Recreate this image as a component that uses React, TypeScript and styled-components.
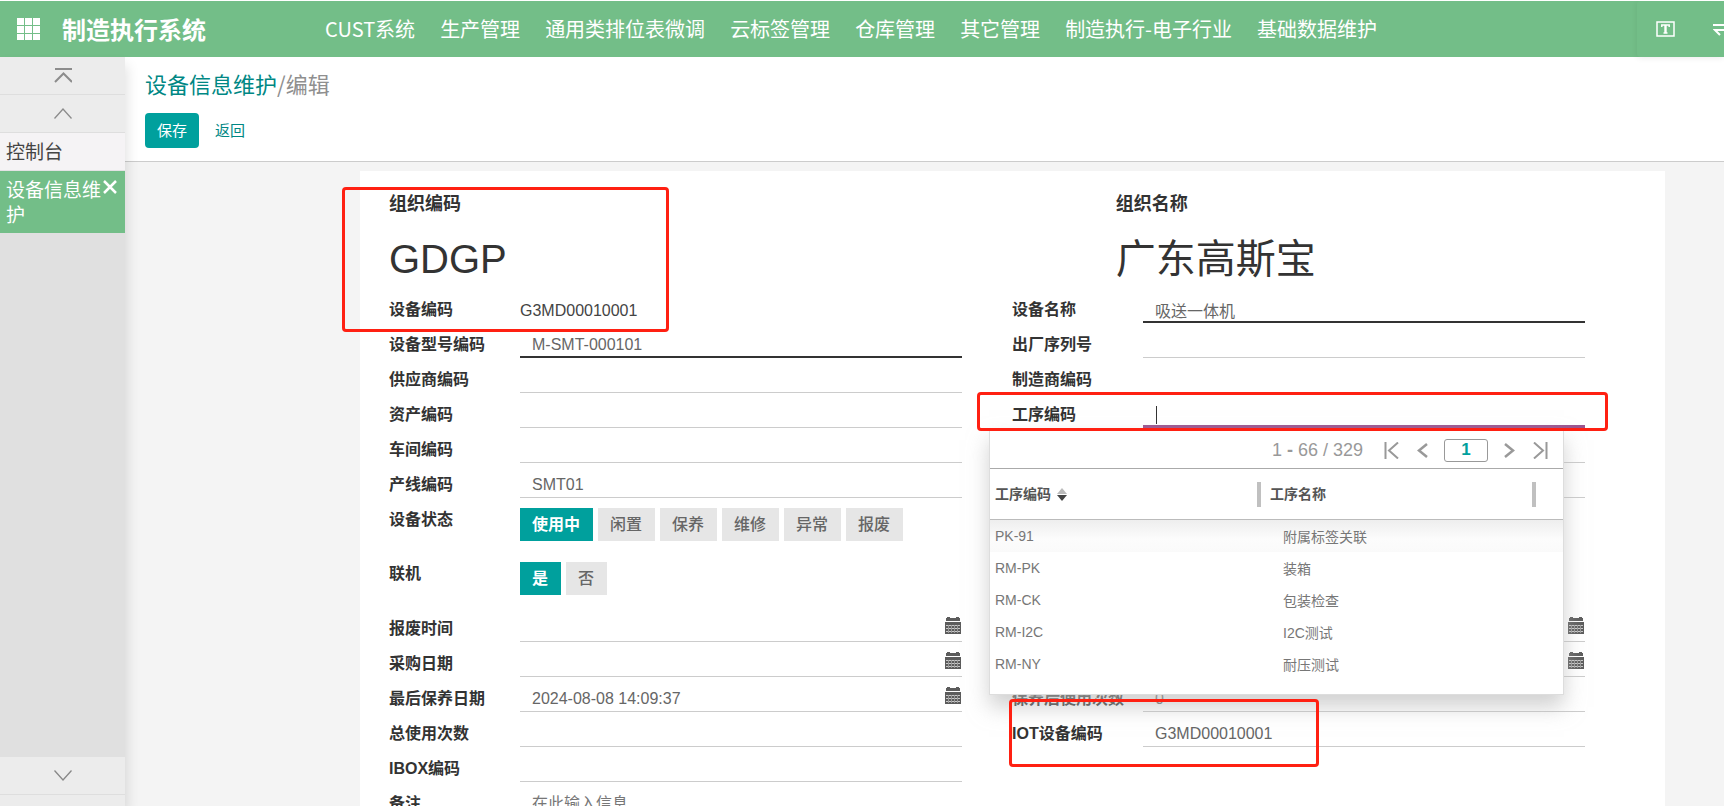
import React from "react";
import styled, { createGlobalStyle, css } from "styled-components";

const sans = `"Liberation Sans", "Noto Sans CJK SC", sans-serif`;
const cjk = `"Noto Sans CJK SC", "Noto Sans", sans-serif`;

const Global = createGlobalStyle`
  *, *::before, *::after { box-sizing: border-box; }
  body { margin: 0; background: #fff; font-family: ${sans}; font-size: 16px; color: #333; }
  button, input { font-family: inherit; }
  button { border: 0; padding: 0; background: none; cursor: pointer; color: inherit; }
  a { text-decoration: none; }
`;

const Shell = styled.div`
  height: 100vh;
  border-top: 1px solid #fff;
  display: flex;
  flex-direction: column;
  overflow: hidden;
`;

/* ---------- top bar ---------- */
const TopBar = styled.header`
  flex: none;
  height: 56px;
  display: flex;
  align-items: stretch;
  background: #73be88;
  color: #fff;
  font-family: ${cjk};
  overflow: visible;
`;
const Brand = styled.div`
  flex: none;
  width: 325px;
  padding-left: 17px;
  display: flex;
  align-items: center;
  gap: 22px;
  font-size: 24px;
  font-weight: 700;
  line-height: 32px;
`;
const IconButton = styled.button`
  display: flex;
  align-items: center;
  justify-content: center;
`;
const Nav = styled.nav`
  flex: 1;
  min-width: 0;
  display: flex;
  align-items: center;
  gap: 25px;
  overflow: hidden;
`;
const NavLink = styled.a`
  color: #fff;
  font-size: 20px;
  line-height: 28px;
  white-space: nowrap;
`;
const UserTools = styled.div`
  flex: none;
  width: 87px;
  padding-left: 19px;
  display: flex;
  align-items: center;
  gap: 38px;
  overflow: hidden;
  background: #73be88;
  border-radius: 4px 0 0 4px;
`;
const ToolsShadow = styled.div`
  display: flex;
  border-radius: 4px;
  position: relative;
  z-index: 3;
  box-shadow: 0 1px 6px rgba(0, 0, 0, 0.08);
`;

/* ---------- sidebar ---------- */
const Body = styled.div`
  flex: 1;
  min-height: 0;
  display: flex;
`;
const Sidebar = styled.aside`
  flex: none;
  position: relative;
  z-index: 2;
  width: 125px;
  display: flex;
  flex-direction: column;
  background: #e0e0e0;
  box-shadow: 2px 8px 12px rgba(0, 0, 0, 0.12);
  font-family: ${cjk};
`;
const ScrollButton = styled.button`
  flex: none;
  width: 100%;
  height: 38px;
  display: flex;
  align-items: center;
  justify-content: center;
  background: #ececec;
  border-bottom: 1px solid #dedede;
`;
const SidebarFoot = styled.div`
  margin-top: auto;
  height: 49px;
  overflow: hidden;
`;
const Tab = styled.div<{ $active?: boolean }>`
  display: flex;
  align-items: flex-start;
  gap: 2px;
  padding: 5px 6px 7px;
  font-size: 19px;
  line-height: 25px;
  background: ${(p) => (p.$active ? "#73be88" : "#f5f3f5")};
  border-bottom: ${(p) => (p.$active ? "0" : "1px solid #e4e2e4")};
`;
const TabLink = styled.a<{ $active?: boolean }>`
  width: 95px;
  color: ${(p) => (p.$active ? "#fff" : "#444")};
`;
const CloseButton = styled(IconButton)`
  height: 22px;
`;

/* ---------- main ---------- */
const Main = styled.main`
  flex: 1;
  min-width: 0;
  display: flex;
  flex-direction: column;
  background: #f4f4f4;
  overflow: hidden;
`;
const ControlPanel = styled.div`
  flex: none;
  padding: 10px 20px 13px;
  background: #fff;
  border-bottom: 1px solid #ccc;
  font-family: ${cjk};
`;
const Breadcrumb = styled.div`
  font-size: 22px;
  line-height: 32px;
  color: #8f8f8f;
  a { color: #008784; }
`;
const Actions = styled.div`
  margin-top: 14px;
  display: flex;
  gap: 4px;
`;
const ActionButton = styled.button<{ $primary?: boolean }>`
  height: 35px;
  padding: 0 12px 2px;
  border-radius: 4px;
  font-size: 15px;
  color: ${(p) => (p.$primary ? "#fff" : "#008784")};
  background: ${(p) => (p.$primary ? "#00a09d" : "transparent")};
`;

const Sheet = styled.form`
  flex: none;
  position: relative;
  margin: 9px 59px 0 235px;
  padding: 21px 30px 40px 29px;
  background: #fff;
`;
const TitleRow = styled.div`
  display: grid;
  grid-template-columns: 7fr 5fr;
`;
const TitleLabel = styled.div`
  font-size: 18px;
  font-weight: 700;
  line-height: 24px;
`;
const TitleValue = styled.h1`
  margin: 14px 0 0;
  font-size: 40px;
  font-weight: 400;
  line-height: 58px;
`;
const Fields = styled.div`
  display: grid;
  grid-template-columns: 1fr 1fr;
  & + & { margin-top: 1px; }
`;
const Cell = styled.div<{ $wide?: boolean }>`
  padding-right: 50px;
  ${(p) => p.$wide && css`grid-column: 1 / -1;`}
`;
const Field = styled.div`
  position: relative;
  display: grid;
  grid-template-columns: 131px 1fr;
  min-height: 35px;
`;
const Label = styled.label`
  padding-top: 11px;
  font-weight: 700;
  line-height: 21px;
  white-space: nowrap;
`;
const Control = styled.div`
  position: relative;
  min-width: 0;
`;
const lines = {
  plain: "1px solid #ccc",
  required: "2px solid #333",
  focus: "3px solid #9b5690",
};
type Line = keyof typeof lines;
const TextInput = styled.input<{ $line: Line }>`
  display: block;
  width: 100%;
  height: 35px;
  padding: 10px 12px 0;
  border: 0;
  border-bottom: ${(p) => lines[p.$line]};
  border-radius: 0;
  outline: 0;
  background: transparent;
  font-size: 16px;
  color: #666;
  caret-color: transparent;
  &::placeholder { color: #777; opacity: 1; }
`;
const ReadOnly = styled.output`
  display: block;
  padding-top: 12px;
  line-height: 21px;
  color: #444;
`;
const Caret = styled.span`
  position: absolute;
  left: 13px;
  top: 13px;
  width: 1px;
  height: 18px;
  background: #333;
`;
const DateButton = styled(IconButton)`
  position: absolute;
  right: 1px;
  top: 10px;
`;
const Choices = styled.div`
  display: flex;
  gap: 5px;
  padding: 10px 0 11px;
`;
const Choice = styled.button<{ $on?: boolean }>`
  height: 33px;
  padding: 0 13px 3px 12px;
  font-size: 16px;
  font-weight: ${(p) => (p.$on ? 700 : 500)};
  color: ${(p) => (p.$on ? "#fff" : "#666")};
  background: ${(p) => (p.$on ? "#00a09d" : "#e6e6e6")};
`;

/* ---------- red marks ---------- */
const Mark = styled.div`
  position: absolute;
  z-index: 6;
  border: 3px solid #ff2012;
  border-radius: 4px;
  pointer-events: none;
`;
const OrgMark = styled(Mark)`
  left: -18px;
  top: 16px;
  width: 327px;
  height: 145px;
`;
const ProcessMark = styled(Mark)`
  left: -35px;
  right: -23px;
  top: -1px;
  bottom: -3px;
`;
const IotMark = styled(Mark)`
  left: -3px;
  top: -13px;
  width: 310px;
  height: 68px;
`;

/* ---------- drop-down list ---------- */
const Popup = styled.div`
  position: absolute;
  z-index: 5;
  left: -23px;
  right: 21px;
  top: 35px;
  height: 267px;
  background: #fff;
  border: 1px solid #ddd;
  box-shadow: 0 12px 20px rgba(185, 185, 185, 0.65);
`;
const Pager = styled.div`
  height: 40px;
  padding: 3px 15px 0 0;
  display: flex;
  align-items: center;
  justify-content: flex-end;
  border-bottom: 1px solid #aaa;
  color: #999;
  font-size: 18px;
`;
const Range = styled.span`
  margin-right: 21px;
`;
const PageInput = styled.input`
  width: 44px;
  height: 23px;
  margin: 0 16px;
  padding: 0;
  border: 1px solid #999;
  border-radius: 3px;
  background: #fff;
  text-align: center;
  font-size: 17px;
  font-weight: 700;
  color: #00a09d;
`;
const PagerButton = styled(IconButton)`
  & + & { margin-left: 17px; }
`;
const List = styled.table`
  width: 100%;
  table-layout: fixed;
  border-collapse: separate;
  border-spacing: 0;
  font-size: 14px;
  th { height: 51px; padding: 0; border-bottom: 1px solid #bbb; color: #555; text-align: left; }
  td { height: 32px; padding: 0 0 0 5px; color: #777; }
  td + td { padding-left: 18px; }
  tbody tr:first-child td { background: linear-gradient(#eee, #fcfcfc 60%, #fafafa); }
`;
const NarrowCol = styled.col`
  width: 4%;
`;
const WideCol = styled.col`
  width: 48%;
`;
const HeadCell = styled.div`
  display: flex;
  align-items: center;
  gap: 6px;
  padding: 0 4px 0 5px;
  line-height: 20px;
`;
const Grip = styled.i`
  margin-left: auto;
  width: 4px;
  height: 25px;
  background: #c0c0c0;
`;

/* ---------- drawings ---------- */
const Chevron = ({ d, w, h, sw = 2, color = "#999" }: { d: string; w: number; h: number; sw?: number; color?: string }) => (
  <svg width={w} height={h} viewBox={`0 0 ${w} ${h}`} fill="none" stroke={color} strokeWidth={sw}>
    <path d={d} />
  </svg>
);
const AppsIcon = () => (
  <svg width="23" height="22" viewBox="0 0 23 22" fill="#fff">
    {[0, 8, 16].map((x) => [0, 8, 16].map((y) => <rect key={`${x}-${y}`} x={x} y={y} width="7" height={y === 16 ? 6 : 7} />))}
  </svg>
);
const CalendarIcon = () => (
  <svg width="16" height="17" viewBox="0 0 16 17">
    <path fill="#5c5c5c" d="M1 1h1V0h3v1h6V0h3v1h1v3H1zM0 5h16v12H0z" />
    <path stroke="#c8c8c8" strokeWidth="1" d="M1 8.500h14M1 11.500h14M1 14.500h14" />
    <path stroke="#999" strokeWidth="1" d="M3.500 8v8M6.500 8v8M9.500 8v8M12.500 8v8" />
  </svg>
);
const TextIcon = () => (
  <svg width="19" height="16" viewBox="0 0 19 16" fill="none" stroke="#fff">
    <rect x="1" y="1" width="17" height="14" strokeWidth="1.500" />
    <path strokeWidth="1.500" d="M5.800 6V4h7.400v2M7.500 12h4" />
    <path strokeWidth="2.400" d="M9.500 4v8" />
  </svg>
);
const SwapIcon = () => (
  <svg width="20" height="14" viewBox="0 0 20 14" fill="none" stroke="#fff" strokeWidth="2">
    <path d="M0 3h19L14 0M20 8H2l5 5" />
  </svg>
);
const SortIcon = () => (
  <svg width="10" height="13" viewBox="0 0 10 13">
    <path fill="#bbb" d="M5 0l5 6H0z" />
    <path fill="#444" d="M0 7h10l-5 6z" />
  </svg>
);

/* ---------- fields ---------- */
type InputProps = { id: string; label: string; value?: string; line?: Line; date?: boolean; placeholder?: string; children?: React.ReactNode };
const InputField = ({ id, label, value, line = "plain", date, placeholder, children }: InputProps) => (
  <Cell>
    <Field>
      <Label htmlFor={id}>{label}</Label>
      <Control>
        <TextInput id={id} $line={line} defaultValue={value} placeholder={placeholder} autoComplete="off" />
        {line === "focus" && <Caret />}
        {date && (
          <DateButton type="button" aria-label="选择日期">
            <CalendarIcon />
          </DateButton>
        )}
      </Control>
      {children}
    </Field>
  </Cell>
);
const ChoiceField = ({ label, options }: { label: string; options: string[] }) => {
  const [on, setOn] = React.useState(options[0]);
  return (
    <Cell $wide>
      <Field role="group" aria-label={label}>
        <Label as="span">{label}</Label>
        <Choices>
          {options.map((o) => (
            <Choice key={o} type="button" $on={o === on} aria-pressed={o === on} onClick={() => setOn(o)}>
              {o}
            </Choice>
          ))}
        </Choices>
      </Field>
    </Cell>
  );
};

const menus = ["CUST系统", "生产管理", "通用类排位表微调", "云标签管理", "仓库管理", "其它管理", "制造执行-电子行业", "基础数据维护"];
const processes = [
  ["PK-91", "附属标签关联"],
  ["RM-PK", "装箱"],
  ["RM-CK", "包装检查"],
  ["RM-I2C", "I2C测试"],
  ["RM-NY", "耐压测试"],
];

const ProcessPopup = () => (
  <Popup>
    <Pager>
      <Range>
        1 <b>-</b> 66 / 329
      </Range>
      <PagerButton type="button" aria-label="首页">
        <Chevron w={15} h={17} d="M1.500 0v17M14 0.500L5 8.500l9 8" />
      </PagerButton>
      <PagerButton type="button" aria-label="上一页">
        <Chevron w={12} h={15} sw={2.5} d="M11 1L3 7.500l8 6.500" />
      </PagerButton>
      <PageInput aria-label="页码" defaultValue="1" />
      <PagerButton type="button" aria-label="下一页">
        <Chevron w={12} h={15} sw={2.5} d="M1 1l8 6.500L1 14" />
      </PagerButton>
      <PagerButton type="button" aria-label="末页">
        <Chevron w={15} h={17} d="M13.500 0v17M1 0.500l9 8-9 8" />
      </PagerButton>
    </Pager>
    <List>
      <colgroup>
        <WideCol />
        <WideCol />
        <NarrowCol />
      </colgroup>
      <thead>
        <tr>
          <th>
            <HeadCell>
              工序编码
              <SortIcon />
              <Grip />
            </HeadCell>
          </th>
          <th>
            <HeadCell>
              工序名称
              <Grip />
            </HeadCell>
          </th>
          <th />
        </tr>
      </thead>
      <tbody>
        {processes.map(([code, name]) => (
          <tr key={code}>
            <td>{code}</td>
            <td>{name}</td>
            <td />
          </tr>
        ))}
      </tbody>
    </List>
  </Popup>
);

export default function App() {
  return (
    <Shell>
      <Global />
      <TopBar>
        <Brand>
          <IconButton aria-label="应用">
            <AppsIcon />
          </IconButton>
          制造执行系统
        </Brand>
        <Nav>
          {menus.map((m) => (
            <NavLink key={m} href="#">
              {m}
            </NavLink>
          ))}
        </Nav>
        <ToolsShadow>
          <UserTools>
            <IconButton aria-label="文字">
              <TextIcon />
            </IconButton>
            <IconButton aria-label="切换">
              <SwapIcon />
            </IconButton>
          </UserTools>
        </ToolsShadow>
      </TopBar>
      <Body>
        <Sidebar>
          <ScrollButton aria-label="滚动到顶部">
            <Chevron w={18} h={15} sw={2} color="#8c8c8c" d="M1 1h17M1 14l8.500-8.500L18 14" />
          </ScrollButton>
          <ScrollButton aria-label="向上滚动">
            <Chevron w={18} h={11} sw={1.3} color="#8c8c8c" d="M0.500 10.500L9 1l8.500 9.500" />
          </ScrollButton>
          <Tab>
            <TabLink href="#">控制台</TabLink>
          </Tab>
          <Tab $active>
            <TabLink href="#" $active>
              设备信息维护
            </TabLink>
            <CloseButton aria-label="关闭">
              <Chevron w={14} h={14} sw={2.5} color="#fff" d="M1 1l12 12M13 1L1 13" />
            </CloseButton>
          </Tab>
          <SidebarFoot>
            <ScrollButton aria-label="向下滚动">
              <Chevron w={18} h={11} sw={1.3} color="#888" d="M0.500 0.500L9 10l8.500-9.500" />
            </ScrollButton>
            <ScrollButton aria-label="滚动到底部" />
          </SidebarFoot>
        </Sidebar>
        <Main>
          <ControlPanel>
            <Breadcrumb>
              <a href="#">设备信息维护</a>/编辑
            </Breadcrumb>
            <Actions>
              <ActionButton type="button" $primary>
                保存
              </ActionButton>
              <ActionButton type="button">返回</ActionButton>
            </Actions>
          </ControlPanel>
          <Sheet>
            <OrgMark />
            <TitleRow>
              <div>
                <TitleLabel>组织编码</TitleLabel>
                <TitleValue>GDGP</TitleValue>
              </div>
              <div>
                <TitleLabel>组织名称</TitleLabel>
                <TitleValue>广东高斯宝</TitleValue>
              </div>
            </TitleRow>
            <Fields>
              <Cell>
                <Field>
                  <Label htmlFor="code">设备编码</Label>
                  <ReadOnly id="code">G3MD00010001</ReadOnly>
                </Field>
              </Cell>
              <InputField id="name" label="设备名称" value="吸送一体机" line="required" />
              <InputField id="model" label="设备型号编码" value="M-SMT-000101" line="required" />
              <InputField id="serial" label="出厂序列号" />
              <InputField id="supplier" label="供应商编码" />
              <InputField id="maker" label="制造商编码" />
              <InputField id="asset" label="资产编码" />
              <InputField id="process" label="工序编码" line="focus">
                <ProcessPopup />
                <ProcessMark />
              </InputField>
              <InputField id="shop" label="车间编码" />
              <InputField id="f1" label="" />
              <InputField id="line" label="产线编码" value="SMT01" />
              <InputField id="f2" label="" />
              <ChoiceField label="设备状态" options={["使用中", "闲置", "保养", "维修", "异常", "报废"]} />
              <ChoiceField label="联机" options={["是", "否"]} />
            </Fields>
            <Fields>
              <InputField id="scrap" label="报废时间" date />
              <InputField id="f3" label="" date />
              <InputField id="buy" label="采购日期" date />
              <InputField id="f4" label="" date />
              <InputField id="maintain" label="最后保养日期" value="2024-08-08 14:09:37" date />
              <InputField id="since" label="保养后使用次数" value="0" />
              <InputField id="total" label="总使用次数" />
              <InputField id="iot" label="IOT设备编码" value="G3MD00010001">
                <IotMark />
              </InputField>
              <InputField id="ibox" label="IBOX编码" />
              <Cell />
              <InputField id="note" label="备注" placeholder="在此输入信息" />
            </Fields>
          </Sheet>
        </Main>
      </Body>
    </Shell>
  );
}
